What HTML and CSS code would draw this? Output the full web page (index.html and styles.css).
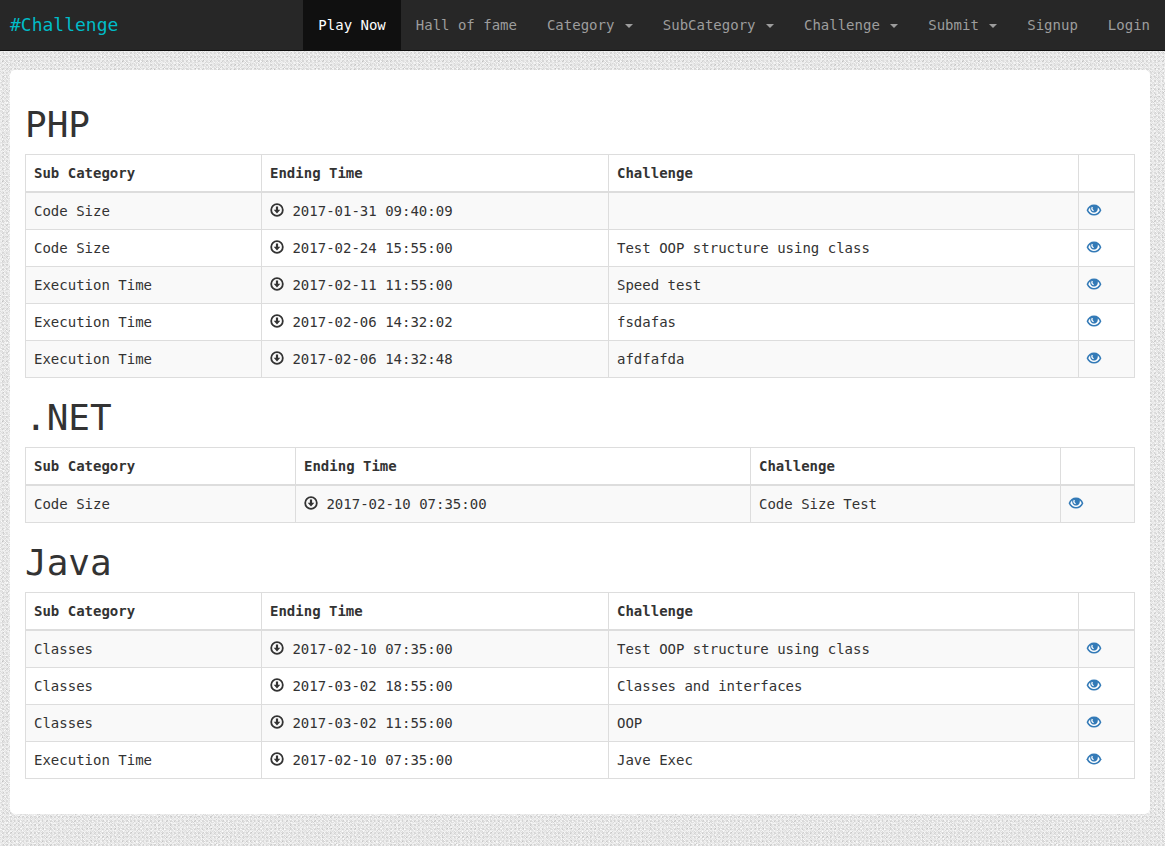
FILE: index.html
```html
<!DOCTYPE html>
<html lang="en">
<head>
<meta charset="utf-8">
<title>#Challenge</title>
<link rel="stylesheet" href="styles.css">
</head>
<body>
<svg class="defs" aria-hidden="true">
<symbol id="down" viewBox="0 0 14 14"><circle cx="7" cy="7" r="5.8" fill="none" stroke="currentColor" stroke-width="1.8"/><path d="M5.900 3.500h2.200v3.200h2.200L7 10.600 3.700 6.700h2.200z" fill="currentColor"/></symbol>
<symbol id="eye" viewBox="-1 0 16 14"><path d="M-.4 7.200C.9 3.500 3.600 1.500 7 1.500s6.100 2 7.400 5.700C13 10.700 10.400 12.500 7 12.500S1 10.700-.4 7.200z" fill="currentColor"/><path d="M3.200 4.600C2.300 5.300 1.700 6.200 1.300 7.200 2.500 9.600 4.500 10.900 7 10.900s4.500-1.300 5.700-3.700c-.4-1-1-1.900-1.900-2.600.3 3-1.400 5-3.800 5s-4.100-2-3.800-5z" fill="#fff"/><path d="M5.300 4C4.400 5.600 5 7.100 6.600 7.700" fill="none" stroke="#fff" stroke-width="1.300"/></symbol>
</svg>
<nav class="navbar">
<a class="brand">#Challenge</a>
<ul class="nav">
<li class="active">Play Now</li>
<li>Hall of fame</li>
<li>Category <b class="caret"></b></li>
<li>SubCategory <b class="caret"></b></li>
<li>Challenge <b class="caret"></b></li>
<li>Submit <b class="caret"></b></li>
<li>Signup</li>
<li>Login</li>
</ul>
</nav>
<main class="panel">
<h1>PHP</h1>
<table>
<colgroup><col class="sub"><col class="time"><col class="name"><col></colgroup>
<thead><tr><th>Sub Category</th><th>Ending Time</th><th>Challenge</th><th></th></tr></thead>
<tbody>
<tr><td>Code Size</td><td><svg class="icon"><use href="#down"/></svg> 2017-01-31 09:40:09</td><td></td><td><svg class="icon eye"><use href="#eye"/></svg></td></tr>
<tr><td>Code Size</td><td><svg class="icon"><use href="#down"/></svg> 2017-02-24 15:55:00</td><td>Test OOP structure using class</td><td><svg class="icon eye"><use href="#eye"/></svg></td></tr>
<tr><td>Execution Time</td><td><svg class="icon"><use href="#down"/></svg> 2017-02-11 11:55:00</td><td>Speed test</td><td><svg class="icon eye"><use href="#eye"/></svg></td></tr>
<tr><td>Execution Time</td><td><svg class="icon"><use href="#down"/></svg> 2017-02-06 14:32:02</td><td>fsdafas</td><td><svg class="icon eye"><use href="#eye"/></svg></td></tr>
<tr><td>Execution Time</td><td><svg class="icon"><use href="#down"/></svg> 2017-02-06 14:32:48</td><td>afdfafda</td><td><svg class="icon eye"><use href="#eye"/></svg></td></tr>
</tbody>
</table>
<h1>.NET</h1>
<table class="net">
<colgroup><col class="sub"><col class="time"><col class="name"><col></colgroup>
<thead><tr><th>Sub Category</th><th>Ending Time</th><th>Challenge</th><th></th></tr></thead>
<tbody>
<tr><td>Code Size</td><td><svg class="icon"><use href="#down"/></svg> 2017-02-10 07:35:00</td><td>Code Size Test</td><td><svg class="icon eye"><use href="#eye"/></svg></td></tr>
</tbody>
</table>
<h1>Java</h1>
<table>
<colgroup><col class="sub"><col class="time"><col class="name"><col></colgroup>
<thead><tr><th>Sub Category</th><th>Ending Time</th><th>Challenge</th><th></th></tr></thead>
<tbody>
<tr><td>Classes</td><td><svg class="icon"><use href="#down"/></svg> 2017-02-10 07:35:00</td><td>Test OOP structure using class</td><td><svg class="icon eye"><use href="#eye"/></svg></td></tr>
<tr><td>Classes</td><td><svg class="icon"><use href="#down"/></svg> 2017-03-02 18:55:00</td><td>Classes and interfaces</td><td><svg class="icon eye"><use href="#eye"/></svg></td></tr>
<tr><td>Classes</td><td><svg class="icon"><use href="#down"/></svg> 2017-03-02 11:55:00</td><td>OOP</td><td><svg class="icon eye"><use href="#eye"/></svg></td></tr>
<tr><td>Execution Time</td><td><svg class="icon"><use href="#down"/></svg> 2017-02-10 07:35:00</td><td>Jave Exec</td><td><svg class="icon eye"><use href="#eye"/></svg></td></tr>
</tbody>
</table>
</main>
</body>
</html>
```
FILE: styles.css
```css
* { box-sizing: border-box; }
html { min-height: 100%; }
body {
  margin: 0;
  font: 14px/20px "DejaVu Sans Mono", monospace;
  color: #333;
  background-color: #e7e7e7;
  background-image:
    conic-gradient(rgba(0,0,0,.08) 25%, transparent 0 50%, rgba(0,0,0,.02) 0 75%, transparent 0),
    conic-gradient(transparent 25%, rgba(255,255,255,.45) 0 50%, transparent 0 75%, rgba(255,255,255,.35) 0),
    url("data:image/svg+xml,%3Csvg xmlns='http://www.w3.org/2000/svg' width='120' height='120'%3E%3Cfilter id='n' x='0' y='0' width='1' height='1' color-interpolation-filters='sRGB'%3E%3CfeTurbulence type='fractalNoise' baseFrequency='.85' numOctaves='2' stitchTiles='stitch'/%3E%3CfeColorMatrix values='.3 0 0 0 .755 .3 0 0 0 .755 .3 0 0 0 .755 0 0 0 0 1'/%3E%3C/filter%3E%3Crect width='120' height='120' filter='url(%23n)'/%3E%3C/svg%3E");
  background-size: 4px 4px, 2px 2px, 120px 120px;
}
.defs { display: none; }
.navbar {
  display: flex;
  justify-content: space-between;
  height: 51px;
  background: #272727;
  border-bottom: 1px solid #101010;
}
.brand { padding: 15px 10px; font-size: 18px; color: #00bcc8; }
.nav { display: flex; margin: 0; padding: 0; list-style: none; }
.nav li { padding: 15px; color: #9d9d9d; white-space: nowrap; }
.nav .active { background: #101010; color: #fff; }
.caret {
  display: inline-block;
  margin-left: 2px;
  vertical-align: middle;
  border-top: 4px solid;
  border-left: 4px solid transparent;
  border-right: 4px solid transparent;
}
.panel {
  margin: 19px 15px 32px 10px;
  padding: 15px;
  background: #fff;
  border-radius: 5px;
  display: flow-root;
}
h1 { margin: 20px 0 10px; font-size: 36px; font-weight: 400; line-height: 39px; }
table {
  width: 1110px;
  margin-bottom: 20px;
  table-layout: fixed;
  border-collapse: collapse;
  border: 1px solid #ddd;
}
.sub { width: 236px; }
.time { width: 347px; }
.name { width: 470px; }
.net .sub { width: 270px; }
.net .time { width: 455px; }
.net .name { width: 310px; }
th, td { height: 37px; padding: 8px; border: 1px solid #ddd; text-align: left; vertical-align: top; }
th { border-bottom-width: 2px; }
tbody tr:nth-child(odd) { background: #f9f9f9; }
.icon { display: inline-block; position: relative; top: 1px; width: 14px; height: 14px; }
.eye { width: 16px; margin-left: -1px; color: #337ab7; }
```
